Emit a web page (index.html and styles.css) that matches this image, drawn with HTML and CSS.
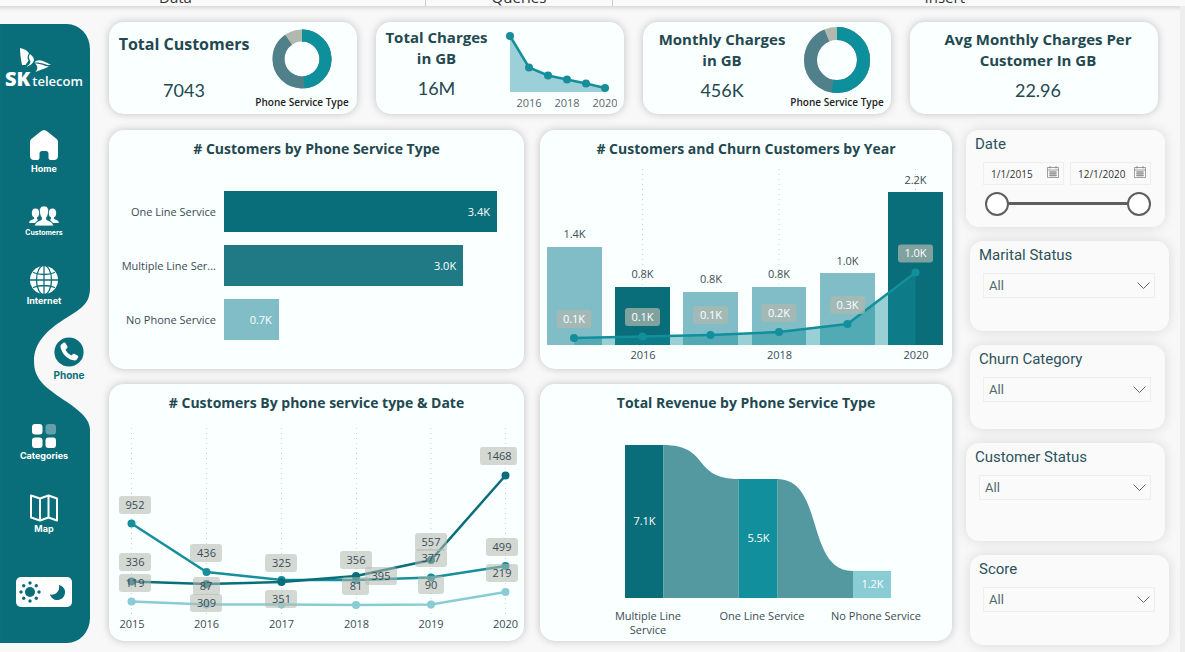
FILE: index.html
```html
<!DOCTYPE html>
<html lang="en">
<head>
<meta charset="utf-8">
<meta name="viewport" content="width=device-width, initial-scale=1">
<title>SK telecom – Phone service dashboard</title>
<link rel="stylesheet" href="styles.css">
</head>
<body>
<div class="ribbon">
  <span class="ribbon-group ribbon-data">Data</span>
  <span class="ribbon-group ribbon-queries">Queries</span>
  <span class="ribbon-group ribbon-insert">Insert</span>
</div>
<div class="report">
  <aside class="sidebar">
    <svg class="sidebar-shape" viewBox="0 0 90 619" preserveAspectRatio="none" aria-hidden="true">
      <path d="M0 0H67A23 25 0 0 1 90 25V264C90 281 80 285 63 296C48 306 34 318 34 337C34 356 46 364 67 378C80 387 90 395 90 406V594A23 25 0 0 1 67 619H0Z" fill="#0A6E7A"/>
    </svg>
    <div class="logo">
      <svg class="logo-wings" viewBox="0 0 32 24" aria-hidden="true">
        <path d="M0 0C5 1 8 3 9 5.500C7 8 7.500 11 8.500 12.500L5.500 17H2C1 12 0 6 0 0Z" fill="#fff"/>
        <path d="M10 6C13 8 14.500 11 13.800 13C12.800 15.500 10 17.500 6.500 19C11 15 11 13.500 9.500 11.500C8.500 10 8.800 7.500 10 6Z" fill="#fff"/>
        <path d="M14.500 14.500C17 11 22 11.500 31 17C26 17.500 22 14 14.500 14.500Z" fill="#fff"/>
        <path d="M15 15.500C20 15 24 18 29 18.500C24 21 19 22 15.500 24C18 20.500 18 18 15 15.500Z" fill="#fff"/>
      </svg>
      <div class="logo-text"><b>SK</b><span>telecom</span></div>
    </div>
    <nav class="nav">
      <a class="nav-item nav-home" href="#home">
        <svg width="28" height="30" viewBox="0 0 28 30" aria-hidden="true"><path d="M14 0C15 0 16 .6 17 1.300L26 8.500C27.500 9.700 28 10.500 28 12V26C28 28.500 26.500 30 24 30H21.500C19.500 30 18.500 29.500 18.500 27.500V23.500C18.500 22 17.500 21 16 21H12C10.500 21 9.500 22 9.500 23.500V27.500C9.500 29.500 8.500 30 6.500 30H4C1.500 30 0 28.500 0 26V12C0 10.500.5 9.700 2 8.500L11 1.300C12 .6 13 0 14 0Z" fill="#fff"/></svg>
        <span>Home</span>
      </a>
      <a class="nav-item nav-customers" href="#customers">
        <svg width="30" height="20" viewBox="0 0 30 20" aria-hidden="true"><g fill="#fff"><ellipse cx="6.500" cy="7" rx="3.700" ry="4.500"/><ellipse cx="23.500" cy="7" rx="3.700" ry="4.500"/><path d="M5 10H8V12.500L9 14L6 17H0C.3 14.500 2 14 5 13Z"/><path d="M25 10H22V12.500L21 14L24 17H30C29.700 14.500 28 14 25 13Z"/></g><g fill="#fff" stroke="#0A6E7A" stroke-width=".8"><path d="M15 0C18.500 0 19.800 2.500 19.500 6C19.300 9 18.300 10.500 17.500 11.500V13.500C19.500 15 24 15.500 24.500 20H5.500C6 15.500 10.500 15 12.500 13.500V11.500C11.700 10.500 10.700 9 10.500 6C10.200 2.500 11.500 0 15 0Z"/></g></svg>
        <span>Customers</span>
      </a>
      <a class="nav-item nav-internet" href="#internet">
        <svg width="28" height="28" viewBox="0 0 28 28" aria-hidden="true"><circle cx="14" cy="14" r="14" fill="#fff"/><g fill="none" stroke="#0A6E7A" stroke-width="1.300"><path d="M14 0V28M0 14H28M3 6.500Q14 10.500 25 6.500M3 21.500Q14 17.500 25 21.500"/><ellipse cx="14" cy="14" rx="7.500" ry="14.600"/></g></svg>
        <span>Internet</span>
      </a>
      <a class="nav-item nav-phone" href="#phone" aria-current="page">
        <svg width="30" height="30" viewBox="0 0 30 30" aria-hidden="true"><circle cx="15" cy="15" r="14.600" fill="#0A6E7A"/><path d="M7.500 7.200L9.700 5.600C10.500 5.200 11.100 5.400 11.600 6.200L13.300 9.300C13.700 10.100 13.500 10.800 12.800 11.400L11.500 12.600C12.500 15.100 14.800 17.300 17.300 18.500L18.700 17.200C19.300 16.600 20 16.500 20.700 16.900L23.500 18.500C24.300 19 24.500 19.700 24.100 20.400L22.700 22.600C22 23.700 20.600 23.700 18.500 23.100C12.700 21.300 8.200 16.600 6.700 10.900C6.300 9.200 6.500 8 7.500 7.200Z" fill="#fff"/></svg>
        <span>Phone</span>
      </a>
      <a class="nav-item nav-categories" href="#categories">
        <svg width="24" height="24" viewBox="0 0 24 24" aria-hidden="true"><rect width="10.500" height="10.500" rx="3" fill="#fff"/><rect x="13.500" width="10.500" height="10.500" rx="3" fill="#649FAA"/><rect y="13.500" width="10.500" height="10.500" rx="3" fill="#fff"/><rect x="13.500" y="13.500" width="10.500" height="10.500" rx="3" fill="#fff"/></svg>
        <span>Categories</span>
      </a>
      <a class="nav-item nav-map" href="#map">
        <svg width="28" height="28" viewBox="0 0 28 28" aria-hidden="true"><path d="M1 1.500L10 4.500L18.500 1.500L27 4.500V26.500L18.500 23.500L10 26.500L1 23.500ZM10 4.500V26M18.500 2V23.500" fill="none" stroke="#fff" stroke-width="2" stroke-linejoin="round"/></svg>
        <span>Map</span>
      </a>
    </nav>
    <button class="theme" type="button" aria-label="Switch light or dark theme">
      <svg width="56" height="30" viewBox="0 0 56 30" aria-hidden="true"><g fill="#0A6E7A"><circle cx="14" cy="15" r="5"/><circle cx="14" cy="6" r="1.700"/><circle cx="14" cy="24" r="1.700"/><circle cx="5" cy="15" r="1.700"/><circle cx="23" cy="15" r="1.700"/><circle cx="7.700" cy="8.700" r="1.700"/><circle cx="20.300" cy="8.700" r="1.700"/><circle cx="7.700" cy="21.300" r="1.700"/><circle cx="20.300" cy="21.300" r="1.700"/><path d="M43 8C47 9 49.500 12 49 16C48.500 20.500 45 23 41 23C38 23 35 21 34 17.500C40 18.500 44 14 43 8Z"/></g></svg>
    </button>
  </aside>

  <main class="main">
    <section class="kpis" aria-label="Key figures">
      <article class="card kpi">
        <div class="kpi-text kpi-text-spread">
          <h2>Total Customers</h2>
          <p>7043</p>
        </div>
        <figure class="kpi-donut kpi-donut-small">
          <svg width="60" height="60" viewBox="0 0 60 60" role="img" aria-label="Customers split by phone service type"><g fill="none" stroke-width="12" transform="rotate(-90 30 30)"><circle cx="30" cy="30" r="23.500" stroke="#B3B8AF"/><circle cx="30" cy="30" r="23.500" stroke="#50808A" pathLength="100" stroke-dasharray="90.300 100"/><circle cx="30" cy="30" r="23.500" stroke="#0E8F9C" pathLength="100" stroke-dasharray="48.500 100"/></g></svg>
          <figcaption>Phone Service Type</figcaption>
        </figure>
      </article>
      <article class="card kpi">
        <div class="kpi-text">
          <h2>Total Charges in&nbsp;GB</h2>
          <p>16M</p>
        </div>
        <figure class="kpi-trend">
          <svg width="112" height="84" viewBox="505 28 112 84" role="img" aria-label="Charges by year">
            <path d="M510 36L529 67.500L548 75.500L567 79.500L586 83.500L605 88V92H510Z" fill="#9BD0D8"/>
            <path d="M510 36L529 67.500L548 75.500L567 79.500L586 83.500L605 88" fill="none" stroke="#178F9B" stroke-width="2.500"/>
            <g fill="#178F9B"><circle cx="510" cy="36" r="4"/><circle cx="529" cy="67.500" r="4"/><circle cx="548" cy="75.500" r="4"/><circle cx="567" cy="79.500" r="4"/><circle cx="586" cy="83.500" r="4"/><circle cx="605" cy="88" r="4"/></g>
            <g class="spark-axis"><text x="529" y="107">2016</text><text x="567" y="107">2018</text><text x="605" y="107">2020</text></g>
          </svg>
        </figure>
      </article>
      <article class="card kpi">
        <div class="kpi-text kpi-text-wide">
          <h2>Monthly Charges in&nbsp;GB</h2>
          <p>456K</p>
        </div>
        <figure class="kpi-donut kpi-donut-large">
          <svg width="68" height="68" viewBox="0 0 68 68" role="img" aria-label="Charges split by phone service type"><g fill="none" stroke-width="13" transform="rotate(-90 34 34)"><circle cx="34" cy="34" r="26.500" stroke="#B3B8AF"/><circle cx="34" cy="34" r="26.500" stroke="#50808A" pathLength="100" stroke-dasharray="93.700 100"/><circle cx="34" cy="34" r="26.500" stroke="#0E8F9C" pathLength="100" stroke-dasharray="52.800 100"/></g></svg>
          <figcaption>Phone Service Type</figcaption>
        </figure>
      </article>
      <article class="card kpi kpi-single">
        <div class="kpi-text">
          <h2>Avg Monthly Charges Per Customer In GB</h2>
          <p>22.96</p>
        </div>
      </article>
    </section>

    <div class="board">
      <div class="charts">
        <section class="card chart">
          <h2># Customers by Phone Service Type</h2>
          <div class="bars">
            <span class="bar-label">One Line Service</span>
            <div><div class="bar bar-dark" style="width:100%">3.4K</div></div>
            <span class="bar-label">Multiple Line Ser...</span>
            <div><div class="bar bar-mid" style="width:87.6%">3.0K</div></div>
            <span class="bar-label">No Phone Service</span>
            <div><div class="bar bar-light" style="width:20.1%">0.7K</div></div>
          </div>
        </section>

        <section class="card chart">
          <h2># Customers and Churn Customers by Year</h2>
          <svg class="plot" viewBox="540 164 412 205" role="img" aria-label="Customers and churned customers by year">
            <g class="grid"><path d="M642.500 169V345M779 169V345M915.500 169V345"/></g>
            <g fill="#80BDC7"><rect x="547" y="247" width="55" height="98"/><rect x="683" y="292" width="55" height="53"/><rect x="752" y="287" width="54" height="58"/><rect x="820" y="273" width="55" height="72"/></g>
            <g fill="#0A6E7A"><rect x="615" y="287" width="55" height="58"/><rect x="888" y="192" width="55" height="153"/></g>
            <path d="M574 338L642.500 336.500L710.500 335L779 332L847.500 324L915.500 272.500V345H574Z" fill="#128F9C" opacity=".42"/>
            <path d="M574 338L642.500 336.500L710.500 335L779 332L847.500 324L915.500 272.500" fill="none" stroke="#128F9C" stroke-width="2.500"/>
            <g fill="#128F9C"><circle cx="574" cy="338" r="4"/><circle cx="642.500" cy="336.500" r="4"/><circle cx="710.500" cy="335" r="4"/><circle cx="779" cy="332" r="4"/><circle cx="847.500" cy="324" r="4"/><circle cx="915.500" cy="272.500" r="4"/></g>
            <g class="churn-tag"><rect x="556.500" y="310" width="35" height="18" rx="3"/><rect x="625" y="308" width="35" height="18" rx="3"/><rect x="693" y="306" width="35" height="18" rx="3"/><rect x="761.500" y="304" width="35" height="18" rx="3"/><rect x="830" y="296" width="35" height="18" rx="3"/><rect x="898" y="244.500" width="35" height="18" rx="3"/></g>
            <g class="on-dark"><text x="574" y="323">0.1K</text><text x="642.500" y="321">0.1K</text><text x="711" y="319">0.1K</text><text x="779" y="317">0.2K</text><text x="847.500" y="309">0.3K</text><text x="915.500" y="257">1.0K</text></g>
            <g class="on-light"><text x="574.500" y="238">1.4K</text><text x="642.500" y="278">0.8K</text><text x="711" y="283">0.8K</text><text x="779" y="278">0.8K</text><text x="847.500" y="265">1.0K</text><text x="915.500" y="184">2.2K</text><text x="643" y="359">2016</text><text x="779.500" y="359">2018</text><text x="916" y="359">2020</text></g>
          </svg>
        </section>

        <section class="card chart">
          <h2># Customers By phone service type &amp; Date</h2>
          <svg class="plot" viewBox="109 419 415 222" role="img" aria-label="Customers by phone service type from 2015 to 2020">
            <g class="grid"><path d="M131.500 428V614M206.500 428V614M281.500 428V614M356.500 428V614M431 428V614M505.500 428V614"/></g>
            <g fill="none" stroke-width="2.500">
              <path d="M131.500 601.500L206.500 604.500L281.500 604.500L356 605L431 604.500L505.500 592" stroke="#8ACCD3"/>
              <path d="M131.500 523.500L206.500 572L281.500 580L356 580L431 577.500L505.500 566" stroke="#178F9B"/>
              <path d="M131.500 581.500L206.500 584L281.500 582L356 576L431 560L505.500 475.500" stroke="#0A6E7A"/>
            </g>
            <g fill="#8ACCD3"><circle cx="131.500" cy="601.500" r="4"/><circle cx="206.500" cy="604.500" r="4"/><circle cx="281.500" cy="604.500" r="4"/><circle cx="356" cy="605" r="4"/><circle cx="431" cy="604.500" r="4"/><circle cx="505.500" cy="592" r="4"/></g>
            <g fill="#178F9B"><circle cx="131.500" cy="523.500" r="4"/><circle cx="206.500" cy="572" r="4"/><circle cx="281.500" cy="580" r="4"/><circle cx="356" cy="580" r="4"/><circle cx="431" cy="577.500" r="4"/><circle cx="505.500" cy="566" r="4"/></g>
            <g fill="#0A6E7A"><circle cx="131.500" cy="581.500" r="4"/><circle cx="206.500" cy="584" r="4"/><circle cx="281.500" cy="582" r="4"/><circle cx="356" cy="576" r="4"/><circle cx="431" cy="560" r="4"/><circle cx="505.500" cy="475.500" r="4"/></g>
            <g class="count-tag"><rect x="119" y="496" width="32" height="18" rx="3"/><rect x="119" y="553" width="32" height="18" rx="3"/><rect x="119" y="574" width="32" height="18" rx="3"/><rect x="190" y="544" width="32" height="18" rx="3"/><rect x="193" y="577" width="27" height="18" rx="3"/><rect x="190" y="594" width="32" height="18" rx="3"/><rect x="265" y="554" width="32" height="18" rx="3"/><rect x="265" y="590" width="32" height="18" rx="3"/><rect x="340" y="551" width="32" height="18" rx="3"/><rect x="365" y="567" width="32" height="18" rx="3"/><rect x="342" y="577" width="27" height="18" rx="3"/><rect x="415" y="533" width="32" height="18" rx="3"/><rect x="415" y="549" width="32" height="18" rx="3"/><rect x="418" y="576" width="26" height="18" rx="3"/><rect x="480" y="447" width="37" height="18" rx="3"/><rect x="486" y="538" width="32" height="18" rx="3"/><rect x="486" y="564" width="32" height="18" rx="3"/></g>
            <g class="on-light"><text x="135" y="509">952</text><text x="135" y="566">336</text><text x="135" y="587">119</text><text x="206.500" y="557">436</text><text x="206" y="590">87</text><text x="206.500" y="607">309</text><text x="281.500" y="567">325</text><text x="281.500" y="603">351</text><text x="356" y="564">356</text><text x="381" y="580">395</text><text x="356" y="590">81</text><text x="431" y="546">557</text><text x="431" y="562">377</text><text x="431" y="589">90</text><text x="499" y="460">1468</text><text x="502" y="551">499</text><text x="502" y="577">219</text>
            <text x="132" y="628">2015</text><text x="206.500" y="628">2016</text><text x="281.500" y="628">2017</text><text x="356.500" y="628">2018</text><text x="431" y="628">2019</text><text x="505.500" y="628">2020</text></g>
          </svg>
        </section>

        <section class="card chart">
          <h2>Total Revenue by Phone Service Type</h2>
          <svg class="plot" viewBox="540 419 412 222" role="img" aria-label="Total revenue by phone service type">
            <g fill="#53999F"><path d="M663 445C711 445 691 479 739 479V598H663Z"/><path d="M777 479C825 479 805 571 853 571V598H777Z"/></g>
            <rect x="625" y="445" width="38" height="153" fill="#0A6E7A"/>
            <rect x="739" y="479" width="38" height="119" fill="#128F9C"/>
            <rect x="853" y="571" width="38" height="27" fill="#8ACCD3"/>
            <path d="M663.500 446V598M738.500 480V598M777.500 480V598" stroke="#7DB3B8" stroke-width=".6"/>
            <g class="on-dark"><text x="644.500" y="525">7.1K</text><text x="758.500" y="542">5.5K</text><text x="872.500" y="588">1.2K</text></g>
            <g class="on-light"><text x="648" y="620">Multiple Line</text><text x="648" y="634">Service</text><text x="762" y="620">One Line Service</text><text x="876" y="620">No Phone Service</text></g>
          </svg>
        </section>
      </div>

      <form class="slicers">
        <fieldset class="slicer slicer-start slicer-end">
          <legend>Date</legend>
          <div class="dates">
            <label class="date"><input type="text" value="1/1/2015" aria-label="Start date"><svg width="12" height="12" viewBox="0 0 12 12" aria-hidden="true"><path d="M.5 1.500H11.500V11.500H.5ZM.5 4H11.500M3 0V2.500M9 0V2.500M2 6H10M2 7.800H10M2 9.600H10M4 5V10.500M6 5V10.500M8 5V10.500" fill="none" stroke="#777" stroke-width=".7"/></svg></label>
            <label class="date"><input type="text" value="12/1/2020" aria-label="End date"><svg width="12" height="12" viewBox="0 0 12 12" aria-hidden="true"><path d="M.5 1.500H11.500V11.500H.5ZM.5 4H11.500M3 0V2.500M9 0V2.500M2 6H10M2 7.800H10M2 9.600H10M4 5V10.500M6 5V10.500M8 5V10.500" fill="none" stroke="#777" stroke-width=".7"/></svg></label>
          </div>
          <div class="range"><input type="range" value="0" aria-label="Range start"><input type="range" value="100" aria-label="Range end"></div>
        </fieldset>
        <div class="slicer slicer-medium slicer-inset">
          <label for="marital">Marital Status</label>
          <div class="pick"><select id="marital"><option>All</option></select><svg width="13" height="8" viewBox="0 0 13 8" aria-hidden="true"><path d="M.5 .5L6.500 6.500L12.500 .5" fill="none" stroke="#666" /></svg></div>
        </div>
        <div class="slicer slicer-short slicer-inset slicer-end">
          <label for="churn">Churn Category</label>
          <div class="pick"><select id="churn"><option>All</option></select><svg width="13" height="8" viewBox="0 0 13 8" aria-hidden="true"><path d="M.5 .5L6.500 6.500L12.500 .5" fill="none" stroke="#666" /></svg></div>
        </div>
        <div class="slicer slicer-tall slicer-start slicer-end">
          <label for="status">Customer Status</label>
          <div class="pick"><select id="status"><option>All</option></select><svg width="13" height="8" viewBox="0 0 13 8" aria-hidden="true"><path d="M.5 .5L6.500 6.500L12.500 .5" fill="none" stroke="#666" /></svg></div>
        </div>
        <div class="slicer slicer-medium slicer-inset">
          <label for="score">Score</label>
          <div class="pick"><select id="score"><option>All</option></select><svg width="13" height="8" viewBox="0 0 13 8" aria-hidden="true"><path d="M.5 .5L6.500 6.500L12.500 .5" fill="none" stroke="#666" /></svg></div>
        </div>
      </form>
    </div>
  </main>
</div>
</body>
</html>
```
FILE: styles.css
```css
* { box-sizing: border-box; }
body {
  margin: 0;
  min-height: 100vh;
  display: flex;
  flex-direction: column;
  background: #f8f8f8;
  color: #234850;
  font-family: "Open Sans", "Noto Sans", sans-serif;
}
h2, p, figure, fieldset { margin: 0; }
svg { display: block; }

.ribbon {
  display: flex;
  align-items: flex-end;
  height: 6px;
  overflow: hidden;
  background: #fafafa;
  color: #333;
  font: 15px/18px "Open Sans", sans-serif;
}
.ribbon-group { text-align: center; }
.ribbon-data { width: 425px; padding-right: 74px; }
.ribbon-queries { width: 188px; border: solid #ccc; border-width: 0 1px; }
.ribbon-insert { flex: 1; padding-right: 220px; text-align: right; }

.report {
  flex: 1;
  display: flex;
  align-items: flex-start;
  border-right: 5px solid #eee;
  box-shadow: inset 0 6px 4px -4px #d4d4d4;
}

.sidebar {
  position: relative;
  flex: none;
  width: 90px;
  margin-top: 18px;
  padding: 24px 4px 36px;
}
.sidebar-shape {
  position: absolute;
  inset: 0;
  z-index: -1;
  width: 100%;
  height: 100%;
}
.logo { height: 42px; color: #fff; }
.logo-wings { width: 32px; height: 24px; margin-left: 16px; }
.logo-text {
  display: flex;
  align-items: baseline;
  gap: 2px;
  margin-top: -3px;
  padding-left: 1px;
  font-size: 13px;
  line-height: 20px;
  font-weight: 600;
}
.logo-text b { font-size: 20px; font-weight: 800; }
.nav { display: flex; flex-direction: column; margin-top: 40px; }
.nav-item {
  display: flex;
  flex-direction: column;
  align-items: center;
  width: 80px;
  gap: 2px;
  color: #fff;
  font: 700 9px/14px Inter, sans-serif;
  text-decoration: none;
}
.nav-customers { margin-top: 30px; font-size: 7px; line-height: 10px; }
.nav-internet { margin-top: 28px; gap: 0; }
.nav-phone { margin: 29px 0 0 25px; color: #0a6e7a; font-size: 10px; gap: 1px; }
.nav-categories { margin-top: 42px; gap: 1px; }
.nav-map { margin-top: 31px; gap: 0; }
.theme {
  display: block;
  width: 56px;
  margin: 41px 0 0 12px;
  padding: 0;
  border: 0;
  border-radius: 5px;
  background: #fff;
}

.main { flex: 1; min-width: 0; padding: 16px 11px 6px 19px; }
.card {
  border-radius: 15px;
  background: #faffff;
  box-shadow: 0 0 8px rgba(0, 0, 0, .22);
}
.kpis {
  display: grid;
  grid-template-columns: repeat(4, minmax(0, 1fr));
  gap: 19px;
  margin-right: 11px;
}
.kpi { display: flex; min-height: 92px; }
.kpi-text {
  flex: none;
  width: 121px;
  padding-top: 5px;
  text-align: center;
}
.kpi-text-wide { width: 158px; padding-top: 7px; }
.kpi-text-spread { width: 150px; padding-top: 12px; }
.kpi-single .kpi-text { width: 100%; padding: 7px 20px 0 28px; }
.kpi h2 { font-size: 15px; line-height: 21px; font-weight: 700; }
.kpi p { margin-top: 8px; font: 18px/22px Lato, sans-serif; }
.kpi-text-spread h2 { font-size: 16px; }
.kpi-text-spread p { margin-top: 24px; }
.kpi-donut {
  flex: 1;
  display: flex;
  flex-direction: column;
  align-items: center;
  justify-content: flex-end;
  min-width: 0;
  padding-bottom: 5px;
}
.kpi-donut-small { gap: 6px; margin-right: 12px; }
.kpi-donut-large { gap: 1px; margin-right: 18px; }
.kpi-donut svg { flex: none; }
.kpi-donut figcaption {
  color: #222;
  font-size: 10px;
  line-height: 14px;
  font-weight: 600;
  white-space: nowrap;
}
.kpi-trend { padding: 6px 0 0 8px; }

.board { display: flex; gap: 14px; margin-top: 16px; }
.charts {
  flex: 1;
  min-width: 0;
  display: grid;
  grid-template-columns: 415fr 412fr;
  gap: 15px 16px;
  align-content: start;
}
.chart { min-width: 0; overflow: hidden; }
.chart h2 {
  padding-top: 8px;
  font-size: 14px;
  line-height: 22px;
  font-weight: 700;
  text-align: center;
}
.chart:nth-child(n+3) h2 { padding-bottom: 5px; }
.chart:nth-child(-n+2) h2 { padding-bottom: 4px; }
.plot { width: 100%; height: auto; }
.plot text, .bars { font-size: 11px; }
.plot text, .spark-axis text { text-anchor: middle; }
.on-dark { fill: #fff; }
.on-light { fill: #3a4c54; }
.spark-axis { font-size: 11px; fill: #60676b; }
.grid { fill: none; stroke: #ccd0d2; stroke-dasharray: 1 4; }
.churn-tag { fill: #b3b8af; opacity: .7; }
.count-tag rect { fill: #b3b8af; opacity: .55; }

.bars {
  display: grid;
  grid-template-columns: 107px 1fr;
  gap: 13px 8px;
  align-items: center;
  padding: 27px 27px 29px 0;
  color: #3a4c54;
}
.bar-label { text-align: right; white-space: nowrap; }
.bar {
  height: 41px;
  padding-right: 7px;
  color: #fff;
  line-height: 41px;
  text-align: right;
}
.bar-dark { background: #0a6e7a; }
.bar-mid { background: #1f7a86; }
.bar-light { background: #80bdc7; }

.slicers {
  flex: none;
  width: 203px;
  display: flex;
  flex-direction: column;
  gap: 14px;
  font-family: Roboto, sans-serif;
}
.slicer {
  min-width: 0;
  padding: 4px 14px 0 9px;
  border: 0;
  border-radius: 13px;
  background: #fafafa;
  box-shadow: 0 0 13px rgba(0, 0, 0, .13);
}
.slicer > label, .slicer legend {
  display: block;
  padding: 0;
  color: #2b535a;
  font-size: 15px;
  line-height: 20px;
}
.slicer legend { float: left; }
.slicer-inset { margin-left: 4px; }
.slicer-end { margin-right: 4px; }
.slicer-short { padding-bottom: 27px; }
.slicer-medium { padding-bottom: 33px; }
.slicer-tall { padding-bottom: 41px; }
.pick {
  display: grid;
  align-items: center;
  height: 25px;
  margin: 8px 0 0 4px;
  border: 1px solid #eee;
}
.pick select, .pick svg { grid-area: 1 / 1; }
.pick svg { justify-self: end; margin-right: 4px; pointer-events: none; }
.pick select {
  width: 100%;
  padding: 0 20px 0 5px;
  border: 0;
  appearance: none;
  background: transparent;
  color: #51686c;
  font: 13px/20px Roboto, sans-serif;
}
.dates {
  clear: both;
  display: grid;
  grid-template-columns: 1fr 1fr;
  gap: 6px;
  padding: 8px 0 0 8px;
}
.date {
  display: flex;
  align-items: center;
  height: 23px;
  padding: 0 4px 0 7px;
  border: 1px solid #eee;
}
.date svg { flex: none; margin-bottom: 4px; }
.date input {
  flex: 1;
  min-width: 0;
  width: 100%;
  padding: 0;
  border: 0;
  background: transparent;
  color: #333;
  font: 10px/16px "Open Sans", sans-serif;
}
.range {
  display: grid;
  margin: 6px 0 11px 10px;
  background: linear-gradient(#605e5c, #605e5c) center / calc(100% - 24px) 3px no-repeat;
}
.range input {
  grid-area: 1 / 1;
  width: 100%;
  height: 25px;
  margin: 0;
  appearance: none;
  background: transparent;
  pointer-events: none;
}
.range input::-webkit-slider-thumb {
  appearance: none;
  width: 24px;
  height: 24px;
  border: 2px solid #605e5c;
  border-radius: 50%;
  background: #fff;
  pointer-events: auto;
}
```
